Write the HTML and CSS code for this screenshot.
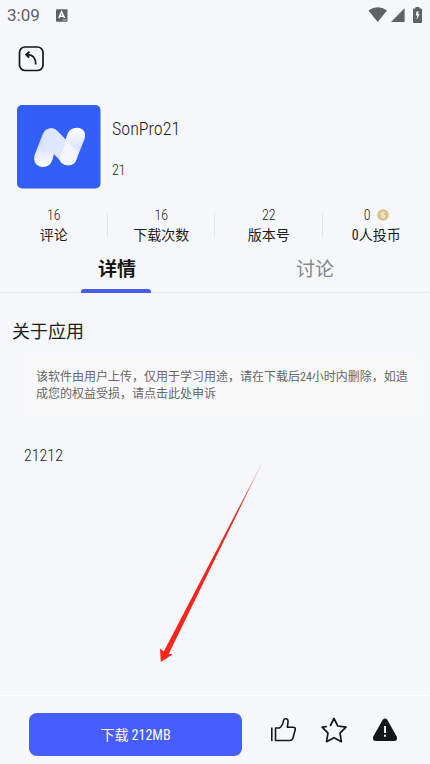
FILE: index.html
```html
<!DOCTYPE html>
<html lang="zh-CN">
<head>
<meta charset="utf-8">
<meta name="viewport" content="width=device-width, initial-scale=1">
<title>SonPro21</title>
<link rel="stylesheet" href="styles.css">
</head>
<body>
<div class="status">
  <span class="time">3:09</span>
  <svg class="status-app" width="12" height="13" viewBox="0 0 12 13"><rect y="0.3" width="11.5" height="12.4" rx="1" fill="#606164"/><path d="M2.8 9 5.6 2.8 8.6 9M3.8 7.2h3.8" fill="none" stroke="#fff" stroke-width="1.5"/><path d="M6.5 11h4" stroke="#c4c5c8" stroke-width="1"/></svg>
  <svg class="wifi" width="20" height="16" viewBox="0 0 20 16"><path d="M0.4 3.4Q9.7-3 19 3.4L9.7 15Z" fill="#606164"/></svg>
  <svg width="14" height="14" viewBox="0 0 14 14"><path d="M13.6 0.3V14H0Z" fill="#606164"/></svg>
  <svg class="battery" width="9" height="16" viewBox="0 0 9 16"><path d="M2.5 0h4v1.5H8q1 0 1 1V15q0 1-1 1H1q-1 0-1-1V2.500q0-1 1-1h1.500Z" fill="#606164"/><path d="M5.800 4.500H3.500L2.800 8.500h1.600L3.500 13 6.700 7.300H5Z" fill="#f5f7fb"/></svg>
</div>
<header class="topbar">
  <button class="icon-button" aria-label="返回">
    <svg width="26" height="26" viewBox="0 0 26 26" fill="none" stroke="#151618"><rect x="1.500" y="1" width="23.500" height="23.500" rx="5.500" stroke-width="1.700"/><path d="M17.700 18.500C18 12.500 15 8.600 9.300 8.600" stroke-width="1.800"/><path d="M11.500 5.700 8.200 8.600 11.100 11.500" stroke-width="1.900"/></svg>
  </button>
</header>
<main>
  <section class="app">
    <svg class="app-icon" width="84" height="84" viewBox="0 0 84 84" role="img" aria-label="SonPro21">
      <defs>
        <linearGradient id="left" x1="0" y1="0" x2="0" y2="1"><stop offset="0.300" stop-color="#cfd9ff"/><stop offset="1" stop-color="#fff"/></linearGradient>
        <linearGradient id="right" x1="0" y1="0" x2="0" y2="1"><stop offset="0" stop-color="#fff"/><stop offset="0.500" stop-color="#dfe5ff"/><stop offset="1" stop-color="#f8f9ff"/></linearGradient>
      </defs>
      <rect width="83.500" height="83.500" rx="5" fill="#315ff8"/>
      <path d="M25.500 29.500Q28 23.300 34 23.300T41.500 30.500L35.500 54.500Q33 62 26 62C19.500 62 16 57 17.500 50.500Z" fill="url(#left)"/>
      <path d="M50.500 29Q53 22.800 60 22.800C66.500 22.800 69.500 28 67.500 34L60 53Q57.500 60.300 51 60.300C45 60.300 41 56 43 50Z" fill="url(#right)"/>
      <path d="M25.500 33.500C27 26 31 23.300 35 23.300Q38 23.300 41 26.500L60.500 47 59.500 54Q57.500 60.300 51 60.300 47.500 60.300 44.500 57L25 37Z" fill="#dfe6ff"/>
      <path d="M49.500 35.500 60.500 47 59.500 54Q57.500 60.300 51 60.300T43 52Z" fill="#f3f5ff"/>
    </svg>
    <div class="app-info">
      <h1>SonPro21</h1>
      <p>21</p>
    </div>
  </section>
  <dl class="stats">
    <div><dd>16</dd><dt>评论</dt></div>
    <div><dd>16</dd><dt>下载次数</dt></div>
    <div><dd>22</dd><dt>版本号</dt></div>
    <div><dd>0 <svg width="12" height="12" viewBox="0 0 12 12"><circle cx="6" cy="6" r="5.800" fill="#dbc18c"/><path d="M7.800 3.800H5.500Q4.300 3.800 4.300 4.900T5.500 6H6.500Q7.700 6 7.700 7.100T6.500 8.200H4.200" fill="none" stroke="#fff8e6" stroke-width="1.200"/></svg></dd><dt>0人投币</dt></div>
  </dl>
  <nav class="tabs">
    <a class="tab active" href="#about" aria-current="page">详情</a>
    <a class="tab" href="#discuss">讨论</a>
  </nav>
  <section class="about" id="about">
    <h2>关于应用</h2>
    <p class="notice">该软件由用户上传，仅用于学习用途，请在下载后24小时内删除，如造成您的权益受损，请点击此处申诉</p>
    <p class="description">21212</p>
    <svg class="pointer" width="106" height="204" viewBox="0 0 106 204"><defs><linearGradient id="fade" x1="1" y1="0" x2="0" y2="1"><stop offset="0" stop-color="#c92f2b" stop-opacity="0.400"/><stop offset="0.250" stop-color="#dc2b23"/><stop offset="0.500" stop-color="#f7251a"/></linearGradient></defs><path d="M104.500 0 4.800 191.500 1 188.500 1.800 202 13.500 194.500 9.800 193.800Z" fill="url(#fade)"/></svg>
  </section>
</main>
<footer class="actions">
  <button class="download">下载 212MB</button>
  <div class="action-icons">
    <button class="icon-button" aria-label="点赞"><svg width="26" height="26" viewBox="0 0 26 26" fill="none" stroke="#151618" stroke-width="1.600" stroke-linejoin="round"><path d="M1.800 10.500V24M5.500 11h3.800Q12.800 9 13.500 3.500 14 1.500 16.300 1.800 18.300 2.200 18 5L17.400 10.300H23.500Q25.700 10.500 25.200 12.800L23 21Q22.200 23.500 20 23.500H5.500Z"/></svg></button>
    <button class="icon-button" aria-label="收藏"><svg width="26" height="26" viewBox="0 0 26 26" fill="none" stroke="#151618" stroke-width="1.700" stroke-linejoin="round"><path d="M9.200 9 13 1.500 16.800 9 25 10.200 19 16.200 20.400 24.700 13 20.700 5.500 24.700 7 16.200 1.200 10.200 6 9.500"/></svg></button>
    <button class="icon-button" aria-label="举报"><svg width="26" height="26" viewBox="0 0 26 26"><path d="M10.700 2.800Q13 0.200 15.300 2.800L24.700 19.500Q26 24 22 24H4Q0 24 1.300 19.500Z" fill="#151618"/><path d="M13 9v7M13 17.800v2" stroke="#f5f7fb" stroke-width="1.900"/></svg></button>
  </div>
</footer>
</body>
</html>
```
FILE: styles.css
```css
* {
  box-sizing: border-box;
}

body {
  display: flex;
  flex-direction: column;
  min-height: 100vh;
  margin: 0;
  background: #f5f7fb;
  color: #1c1d20;
  font-family: "Roboto Condensed", Roboto, "Noto Sans CJK SC", sans-serif;
  font-size: 14px;
  line-height: 20px;
}

h1, h2, p, dl, dd, dt {
  margin: 0;
  font-weight: 400;
}

svg {
  display: block;
  flex: none;
}

button {
  padding: 0;
  border: 0;
  background: none;
  font: inherit;
  cursor: pointer;
}

.status {
  display: flex;
  align-items: center;
  height: 30px;
  padding: 0 8px 0 7px;
}

.time {
  color: #606164;
  font-family: Roboto, sans-serif;
  font-size: 17px;
}

.status-app {
  margin-left: 16px;
}

.wifi {
  margin-left: auto;
  margin-right: 3px;
}

.battery {
  margin-left: 8px;
}

.topbar {
  padding: 16px 18px 33px;
}

.icon-button {
  display: block;
}

.app {
  display: flex;
  gap: 11px;
  padding: 0 16px 0 17px;
}

.app-info {
  display: flex;
  flex-direction: column;
  gap: 21px;
  padding-top: 14px;
}

.app-info h1,
.app-info p,
.stats dd,
.description {
  font-weight: 300;
}

h1 {
  font-size: 18px;
}

.stats {
  display: grid;
  grid-template-columns: repeat(4, 1fr);
  padding-top: 16px;
  text-align: center;
}

.stats > div {
  background: linear-gradient(#e1e3e8, #e1e3e8) right center / 1px 24px no-repeat;
}

.stats > div:last-child {
  background: none;
}

dd {
  display: flex;
  align-items: center;
  justify-content: center;
  gap: 6px;
}

.tabs {
  display: flex;
  padding: 0 16px 0 18px;
  border-bottom: 1px solid #e4e6eb;
}

.tab {
  position: relative;
  flex: 1;
  padding: 15px 0 12px;
  color: #85868a;
  font-size: 19px;
  text-align: center;
  text-decoration: none;
}

.tab.active {
  color: #151618;
  font-weight: 700;
}

.tab.active::after {
  content: "";
  position: absolute;
  bottom: -1px;
  left: calc(50% - 36px);
  width: 70px;
  height: 4px;
  border-radius: 3px 3px 0 0;
  background: #4a5de8;
}

.about {
  position: relative;
  padding: 29px 12px 24px;
}

h2 {
  font-size: 18px;
}

.notice {
  margin: 14px 0 0 12px;
  padding: 13px 8px 13px 12px;
  border-radius: 8px;
  background: #f8f8f8;
  color: #66676a;
  font-size: 12px;
  line-height: 17px;
}

.description {
  padding: 30px 12px 0;
  font-size: 16px;
}

.pointer {
  position: absolute;
  top: 167px;
  left: 159px;
  pointer-events: none;
}

.actions {
  display: flex;
  align-items: center;
  gap: 28px;
  margin-top: auto;
  padding: 17px 32px 8px 29px;
  border-top: 1px solid #fff;
}

.download {
  flex: 1;
  height: 43px;
  border-radius: 8px;
  background: #465dff;
  color: #fff;
}

.action-icons {
  display: flex;
  gap: 25px;
  padding-bottom: 10px;
}
```
